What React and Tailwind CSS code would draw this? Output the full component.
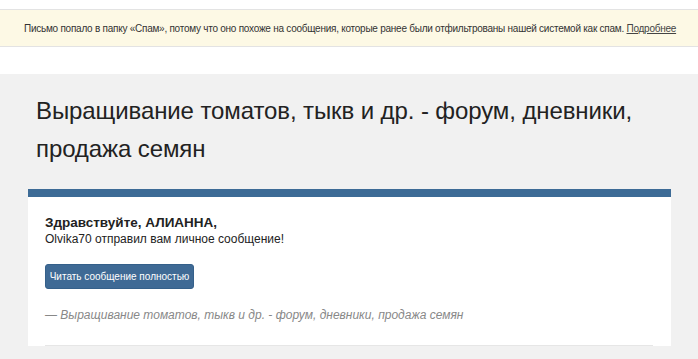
export default function App() {
  return (
    <div className="w-[698px] h-[359px] overflow-hidden bg-white font-['Liberation_Sans',Arial,sans-serif] text-[#222]">
      <div className="h-[9px]" />
      <div className="h-[38px] border-y border-[#e3e3e3] bg-[#fdf9e5] flex items-center pl-[24px] text-[10px] tracking-[-0.25px] text-[#333] whitespace-nowrap">
        <span>
          Письмо попало в папку «Спам», потому что оно похоже на сообщения, которые ранее были отфильтрованы нашей системой как спам.{" "}
          <a href="#" className="underline text-[#444]">Подробнее</a>
        </span>
      </div>
      <div className="h-[27px]" />
      <div className="bg-[#f1f1f1] h-[300px] px-[28px] pt-[18px]">
        <h1 className="pl-[8px] pr-[20px] text-[24px] tracking-[-0.1px] leading-[38px] text-[#222]">
          Выращивание томатов, тыкв и др. - форум, дневники, продажа семян
        </h1>
        <div className="mt-[21px] w-[643px] bg-white border-t-[8px] border-[#3d6b96] px-[17px] pt-[18px]">
          <p className="text-[13.5px] font-bold leading-[16px] text-[#222]">Здравствуйте, АЛИАННА,</p>
          <p className="text-[12px] leading-[16px] text-[#222]">Olvika70 отправил вам личное сообщение!</p>
          <button className="mt-[17px] h-[25px] w-[149px] rounded-[3px] bg-[#3f6a95] text-white text-[10px] border border-[#35608a] whitespace-nowrap">
            Читать сообщение полностью
          </button>
          <p className="mt-[18px] text-[12px] italic text-[#888] leading-[16px]">
            — Выращивание томатов, тыкв и др. - форум, дневники, продажа семян
          </p>
          <div className="mt-[22px] w-[608px] border-t border-[#e6e6e6]" />
        </div>
      </div>
    </div>
  );
}
